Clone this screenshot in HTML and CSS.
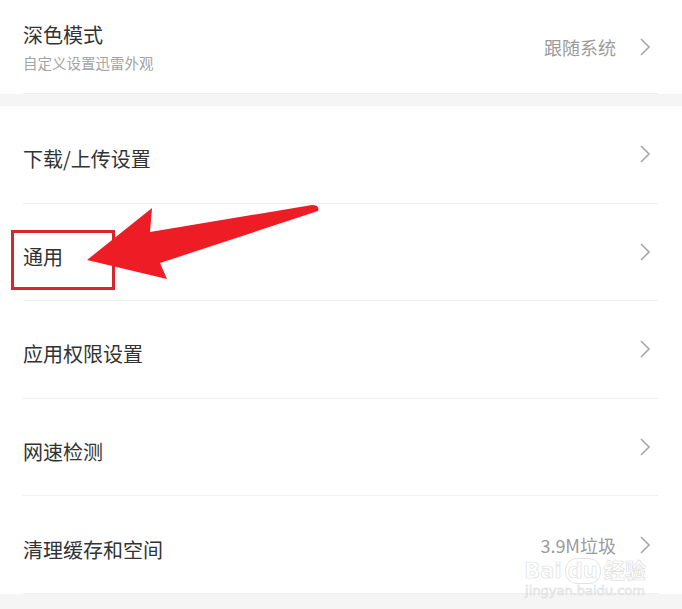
FILE: index.html
```html
<!DOCTYPE html>
<html>
	<head>
		<meta charset="utf-8" />
		<title>设置</title>
		<link rel="stylesheet" href="styles.css">
	</head>
	<body>
		<div class="group">
			<div class="row row-top">
				<div class="label">
					<div class="title">深色模式</div>
					<div class="sub">自定义设置迅雷外观</div>
				</div>
				<div class="side">
					<span class="value">跟随系统</span>
					<svg class="chev" width="14" height="20" viewBox="0 0 14 20"><polyline points="3,2 11,10 3,18" /></svg>
				</div>
			</div>
		</div>
		<div class="gap"></div>
		<div class="group">
			<div class="row">
				<div class="title">下载/上传设置</div>
				<div class="side">
					<svg class="chev" width="14" height="20" viewBox="0 0 14 20"><polyline points="3,2 11,10 3,18" /></svg>
				</div>
			</div>
			<div class="row">
				<div class="title">通用</div>
				<div class="side">
					<svg class="chev" width="14" height="20" viewBox="0 0 14 20"><polyline points="3,2 11,10 3,18" /></svg>
				</div>
			</div>
			<div class="row">
				<div class="title">应用权限设置</div>
				<div class="side">
					<svg class="chev" width="14" height="20" viewBox="0 0 14 20"><polyline points="3,2 11,10 3,18" /></svg>
				</div>
			</div>
			<div class="row">
				<div class="title">网速检测</div>
				<div class="side">
					<svg class="chev" width="14" height="20" viewBox="0 0 14 20"><polyline points="3,2 11,10 3,18" /></svg>
				</div>
			</div>
			<div class="row">
				<div class="title">清理缓存和空间</div>
				<div class="side">
					<span class="value">3.9M垃圾</span>
					<svg class="chev" width="14" height="20" viewBox="0 0 14 20"><polyline points="3,2 11,10 3,18" /></svg>
				</div>
			</div>
		</div>
		<div class="gap gap-end"></div>

		<!-- annotation drawn over the screenshot -->
		<div class="mark-box"></div>
		<svg class="arrow" width="682" height="609" viewBox="0 0 682 609">
			<path d="M87 260 L152 208 L150 232 L312 205 Q320 205 318 211 L160 263 L167 279 Z" />
		</svg>
		<div class="watermark">
			<div class="wm-logo">Bai<span class="wm-du">du</span>经验</div>
			<div class="wm-url">jingyan.baidu.com</div>
		</div>
	</body>
</html>
```

FILE: styles.css
```css
body {
	margin: 0;
	background: #fff;
	font-family: "Noto Sans CJK SC", "Noto Sans", sans-serif;
	color: #333;
}
.group {
	background: #fff;
}
.row {
	height: 97.6px;
	box-sizing: border-box;
	margin: 0 24px 0 23px;
	border-bottom: 1px solid #efefef;
	display: flex;
	align-items: center;
	justify-content: space-between;
}
.row > .title {
	padding-top: 10px;
}
.row-top {
	height: 94px;
}
.title {
	font-size: 20px;
	line-height: 28px;
	color: #333;
}
.sub {
	font-size: 14.5px;
	line-height: 28px;
	color: #a3a3a3;
}
.label {
	margin-top: 4px;
}
.side {
	display: flex;
	align-items: center;
	gap: 22px;
	padding-right: 6px;
}
.value {
	font-size: 18px;
	color: #9b9b9b;
}
.chev polyline {
	fill: none;
	stroke: #a6a6a6;
	stroke-width: 1.6;
}
.gap {
	height: 12px;
	background: #f5f5f5;
}
.gap-end {
	height: 15px;
}
.mark-box {
	position: absolute;
	left: 11px;
	top: 230px;
	width: 98px;
	height: 54px;
	border: 3px solid #d9262c;
}
.arrow {
	position: absolute;
	left: 0;
	top: 0;
}
.arrow path {
	fill: #ee1c25;
}
.watermark {
	position: absolute;
	left: 520px;
	top: 559px;
	width: 130px;
	text-align: center;
	color: transparent;
	-webkit-text-stroke: 0.7px #e0e0e0;
	font-family: "DejaVu Sans", "Noto Sans CJK SC", sans-serif;
}
.wm-logo {
	font-size: 21px;
	line-height: 24px;
	font-weight: bold;
}
.wm-du {
	border: 1.5px solid #e2e2e2;
	border-radius: 12px;
	padding: 0 2px;
	margin: 0 3px;
}
.wm-url {
	font-size: 13px;
	line-height: 15px;
}
```
